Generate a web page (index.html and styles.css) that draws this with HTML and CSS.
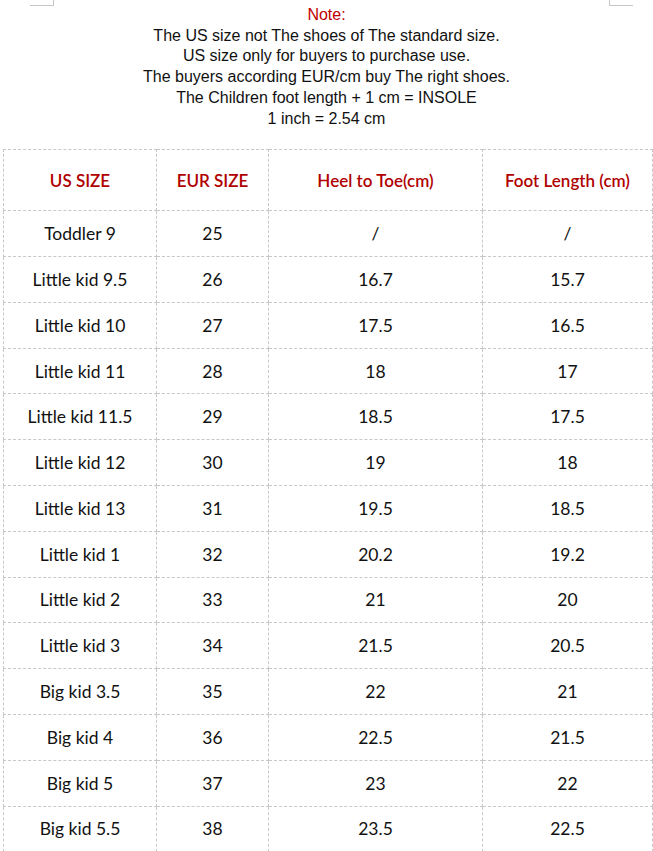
FILE: index.html
```html
<!DOCTYPE html>
<html>
<head>
<meta charset="utf-8">
<link rel="stylesheet" href="styles.css">
</head>
<body>
<div class="page">
  <div class="marks">
    <span class="mark mark-left"></span>
    <span class="mark mark-right"></span>
  </div>
  <div class="note">
    <p class="note-title">Note:</p>
    <p>The US size not The shoes of The standard size.</p>
    <p>US size only for buyers to purchase use.</p>
    <p>The buyers according EUR/cm buy The right shoes.</p>
    <p>The Children foot length + 1 cm = INSOLE</p>
    <p>1 inch = 2.54 cm</p>
  </div>
  <table class="size-table">
    <colgroup>
      <col class="c1"><col class="c2"><col class="c3"><col class="c4">
    </colgroup>
    <thead>
      <tr><th>US SIZE</th><th>EUR SIZE</th><th>Heel to Toe(cm)</th><th>Foot Length (cm)</th></tr>
    </thead>
    <tbody>
      <tr><td>Toddler 9</td><td>25</td><td>/</td><td>/</td></tr>
      <tr><td>Little kid 9.5</td><td>26</td><td>16.7</td><td>15.7</td></tr>
      <tr><td>Little kid 10</td><td>27</td><td>17.5</td><td>16.5</td></tr>
      <tr><td>Little kid 11</td><td>28</td><td>18</td><td>17</td></tr>
      <tr><td>Little kid 11.5</td><td>29</td><td>18.5</td><td>17.5</td></tr>
      <tr><td>Little kid 12</td><td>30</td><td>19</td><td>18</td></tr>
      <tr><td>Little kid 13</td><td>31</td><td>19.5</td><td>18.5</td></tr>
      <tr><td>Little kid 1</td><td>32</td><td>20.2</td><td>19.2</td></tr>
      <tr><td>Little kid 2</td><td>33</td><td>21</td><td>20</td></tr>
      <tr><td>Little kid 3</td><td>34</td><td>21.5</td><td>20.5</td></tr>
      <tr><td>Big kid 3.5</td><td>35</td><td>22</td><td>21</td></tr>
      <tr><td>Big kid 4</td><td>36</td><td>22.5</td><td>21.5</td></tr>
      <tr><td>Big kid 5</td><td>37</td><td>23</td><td>22</td></tr>
      <tr><td>Big kid 5.5</td><td>38</td><td>23.5</td><td>22.5</td></tr>
    </tbody>
  </table>
</div>
</body>
</html>
```
FILE: styles.css
```css
html, body {
  margin: 0;
  padding: 0;
  background: #ffffff;
}
.page {
  width: 653px;
  height: 851px;
  overflow: hidden;
  position: relative;
}
.marks {
  position: relative;
  height: 0;
}
.mark {
  position: absolute;
  top: 0;
  height: 5px;
  width: 23px;
  border-bottom: 1px solid #c6c6c6;
}
.mark-left {
  left: 30px;
  border-right: 1px solid #c6c6c6;
}
.mark-right {
  left: 609px;
  border-left: 1px solid #c6c6c6;
}
.note {
  padding-top: 5px;
  text-align: center;
  font-family: "Liberation Sans", Arial, sans-serif;
  font-size: 16px;
  line-height: 20.7px;
  color: #111111;
}
.note p {
  margin: 0;
}
.note .note-title {
  color: #c00000;
}
.size-table {
  margin: 20px 0 0 3px;
  border-collapse: collapse;
  table-layout: fixed;
  width: 649px;
  font-family: Lato, "Open Sans", sans-serif;
}
.c1 { width: 153px; }
.c2 { width: 112px; }
.c3 { width: 214px; }
.c4 { width: 170px; }
.size-table th,
.size-table td {
  border: 1px dashed #c8c8c8;
  text-align: center;
  padding: 0;
}
.size-table th {
  height: 60px;
  color: #b00000;
  font-size: 17px;
  font-weight: 600;
}
.size-table td {
  height: 44.8px;
  color: #111111;
  font-size: 17.5px;
}
```
